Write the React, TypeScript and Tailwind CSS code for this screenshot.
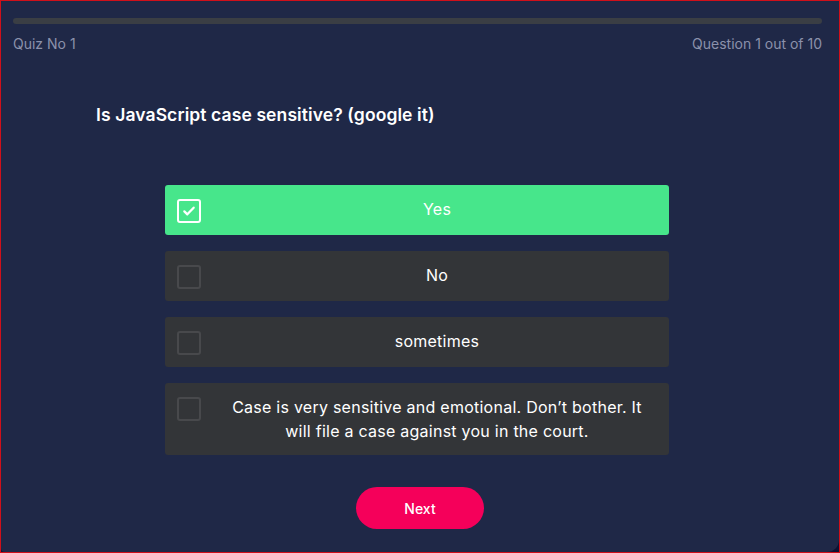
import React from "react";

const OPTIONS = [
  "Yes",
  "No",
  "sometimes",
  "Case is very sensitive and emotional. Don’t bother. It will file a case against you in the court.",
];

function CheckBox({ checked }: { checked: boolean }) {
  if (checked) {
    return (
      <div className="w-6 h-6 mt-[2px] shrink-0 rounded-[3px] border-2 border-white flex items-center justify-center">
        <svg viewBox="0 0 24 24" className="w-4 h-4" fill="none" stroke="white" strokeWidth={3.4} strokeLinecap="round" strokeLinejoin="round">
          <path d="M5 12.5l4.5 4.5L19 7" />
        </svg>
      </div>
    );
  }
  return <div className="w-6 h-6 mt-[2px] shrink-0 rounded-[3px] border-2 border-[#48494c]" />;
}

export default function App() {
  const selected = 0;
  return (
    <div className="w-[840px] h-[553px] border border-[#d0101a] bg-[#0e1233] font-['Inter','Open_Sans',sans-serif]">
      <div className="h-full rounded-br-[12px] rounded-bl-[4px] bg-[#1f2847] flex flex-col pl-3 pr-[17px] pt-[17px]">
        <div className="h-[6px] rounded-full bg-[#3a3e44]" />
        <div className="flex justify-between mt-[9px] text-[14px] text-[#8b91ab]">
          <span>Quiz No 1</span>
          <span>Question 1 out of 10</span>
        </div>
        <h1 className="mt-[48px] ml-[83px] text-[17.5px] font-semibold text-white tracking-[0.1px]">
          Is JavaScript case sensitive? (google it)
        </h1>
        <div className="mt-[57px] flex flex-col gap-4 items-center pr-[1px]">
          {OPTIONS.map((o, i) => (
            <div
              key={o}
              className={`w-[504px] min-h-[50px] rounded-[3px] flex items-start px-3 py-3 ${
                i === selected ? "bg-[#47e68b]" : "bg-[#333538]"
              }`}
            >
              <CheckBox checked={i === selected} />
              <div className="flex-1 pl-4 text-center text-[16px] leading-[24px] text-white tracking-[0.25px]">{o}</div>
            </div>
          ))}
        </div>
        <div className="mt-8 flex justify-center pl-[5px]">
          <button className="w-[128px] h-[42px] rounded-full bg-[#f5005a] text-white text-[14px] font-medium">
            Next
          </button>
        </div>
      </div>
    </div>
  );
}
